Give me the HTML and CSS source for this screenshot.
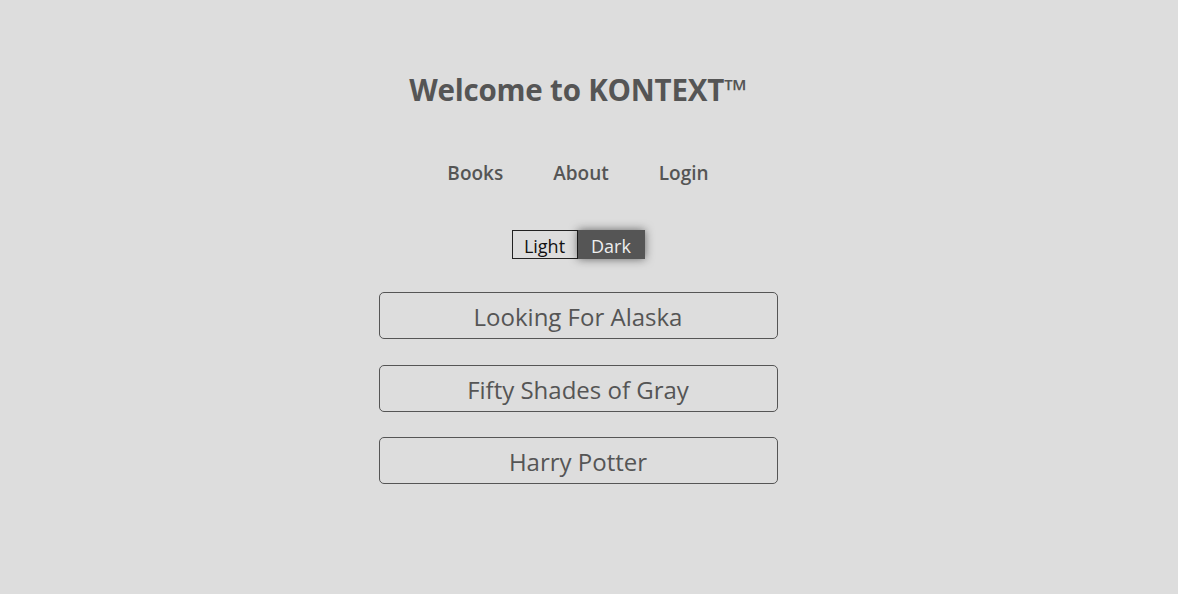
FILE: index.html
```html
<!DOCTYPE html>
<html>
<head>
<meta charset="utf-8">
<link rel="stylesheet" href="styles.css">
</head>
<body>
<div class="page">
  <h1 class="title">Welcome to KONTEXT™</h1>
  <nav class="nav">
    <a class="nav-link">Books</a>
    <a class="nav-link">About</a>
    <a class="nav-link">Login</a>
  </nav>
  <div class="toggle">
    <button class="tbtn light">Light</button>
    <button class="tbtn dark">Dark</button>
  </div>
  <div class="books">
    <div class="book">Looking For Alaska</div>
    <div class="book">Fifty Shades of Gray</div>
    <div class="book">Harry Potter</div>
  </div>
</div>
</body>
</html>
```
FILE: styles.css
```css
html, body {
  margin: 0;
  padding: 0;
  background: #dddddd;
  font-family: "Open Sans", "Noto Sans", sans-serif;
  color: #555555;
}
.page {
  display: flex;
  flex-direction: column;
  align-items: center;
  padding-top: 70px;
  padding-right: 22px;
}
.title {
  margin: 0;
  font-size: 29.5px;
  font-weight: 700;
  line-height: 40px;
  letter-spacing: -0.2px;
}
.nav {
  display: flex;
  gap: 50px;
  margin-top: 48px;
}
.nav-link {
  font-size: 19px;
  font-weight: 600;
  line-height: 30px;
}
.toggle {
  display: flex;
  margin-top: 42px;
  height: 29px;
}
.tbtn {
  font-family: inherit;
  font-size: 18px;
  padding: 3px 8px 0;
  margin: 0;
  line-height: 24px;
}
.light {
  background: transparent;
  border: 1px solid #222;
  color: #111;
  width: 66px;
}
.dark {
  background: #555555;
  color: #eeeeee;
  border: none;
  width: 67px;
  box-shadow: 0 0 10px rgba(0,0,0,0.55);
}
.books {
  display: flex;
  flex-direction: column;
  gap: 25.5px;
  margin-top: 33px;
}
.book {
  box-sizing: border-box;
  width: 399px;
  height: 47px;
  border: 1px solid #555;
  border-radius: 5px;
  display: flex;
  align-items: center;
  justify-content: center;
  font-size: 24px;
  padding-top: 2px;
}
```
